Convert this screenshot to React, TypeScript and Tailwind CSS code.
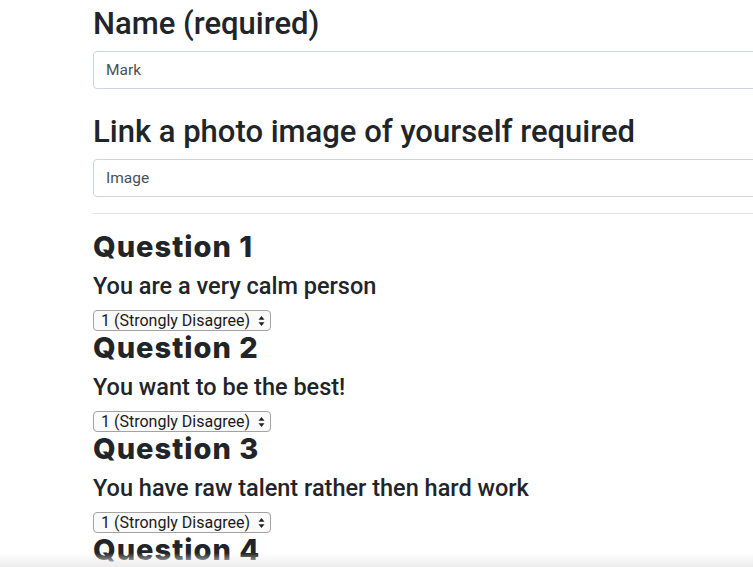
import React from "react";

const QUESTIONS = [
  { title: "Question 1", text: "You are a very calm person" },
  { title: "Question 2", text: "You want to be the best!" },
  { title: "Question 3", text: "You have raw talent rather then hard work" },
  { title: "Question 4", text: "You like working with other people" },
];

function Chevrons() {
  return (
    <svg width="7" height="11" viewBox="0 0 7 11" className="pointer-events-none absolute right-[6px] top-1/2 -translate-y-1/2">
      <path d="M3.5 0.5 L6.5 4.3 L0.5 4.3 Z" fill="#222" />
      <path d="M3.5 10.5 L6.5 6.7 L0.5 6.7 Z" fill="#222" />
    </svg>
  );
}

function Scale() {
  return (
    <div className="relative w-[178px]">
      <select
        defaultValue="1"
        className="block appearance-none h-[21px] w-[178px] rounded-[4px] border border-[#a3a3a3] bg-[#fafafa] pl-[7px] pr-4 text-[16px] leading-[19px] text-[#1a1a1a]"
        style={{ fontFamily: "Roboto, 'Liberation Sans', sans-serif" }}
      >
        <option value="1">1 (Strongly Disagree)</option>
        <option value="2">2 (Disagree)</option>
        <option value="3">3 (Neutral)</option>
        <option value="4">4 (Agree)</option>
        <option value="5">5 (Strongly Agree)</option>
      </select>
      <Chevrons />
    </div>
  );
}

export default function App() {
  return (
    <div
      className="relative h-[567px] w-[753px] overflow-hidden bg-white text-[#212529]"
      style={{ fontFamily: "Roboto, 'Liberation Sans', sans-serif" }}
    >
      <div className="w-[720px] pl-[93px] pt-[5px]">
        <div className="mb-[24px]">
          <h2 className="mb-2 text-[31px] font-medium leading-[38px]">Name (required)</h2>
          <input
            defaultValue="Mark"
            className="block h-[38px] w-[700px] rounded-[4px] border border-[#ced4da] px-3 text-[15.5px] text-[#495057] outline-none"
          />
        </div>
        <div>
          <h2 className="mb-2 text-[31px] font-medium leading-[38px]">Link a photo image of yourself required</h2>
          <input
            placeholder="Image"
            className="block h-[38px] w-[700px] rounded-[4px] border border-[#ced4da] px-3 text-[15.5px] text-[#495057] placeholder:text-[#495057] outline-none"
          />
        </div>
        <hr className="my-4 w-[700px] border-t border-[#e2e2e2]" />
        {QUESTIONS.map((q) => (
          <div key={q.title}>
            <h3
              className="mb-2 text-[29px] font-extrabold leading-[34px] tracking-[0.035em]"
              style={{ fontFamily: "Inter, 'Liberation Sans', sans-serif" }}
            >
              {q.title}
            </h3>
            <h4 className="mb-[10px] text-[23.5px] font-medium leading-[28px]">{q.text}</h4>
            <Scale />
          </div>
        ))}
      </div>
      <div className="pointer-events-none absolute bottom-0 left-0 h-[14px] w-full bg-gradient-to-b from-transparent to-[#ececec]" />
    </div>
  );
}
